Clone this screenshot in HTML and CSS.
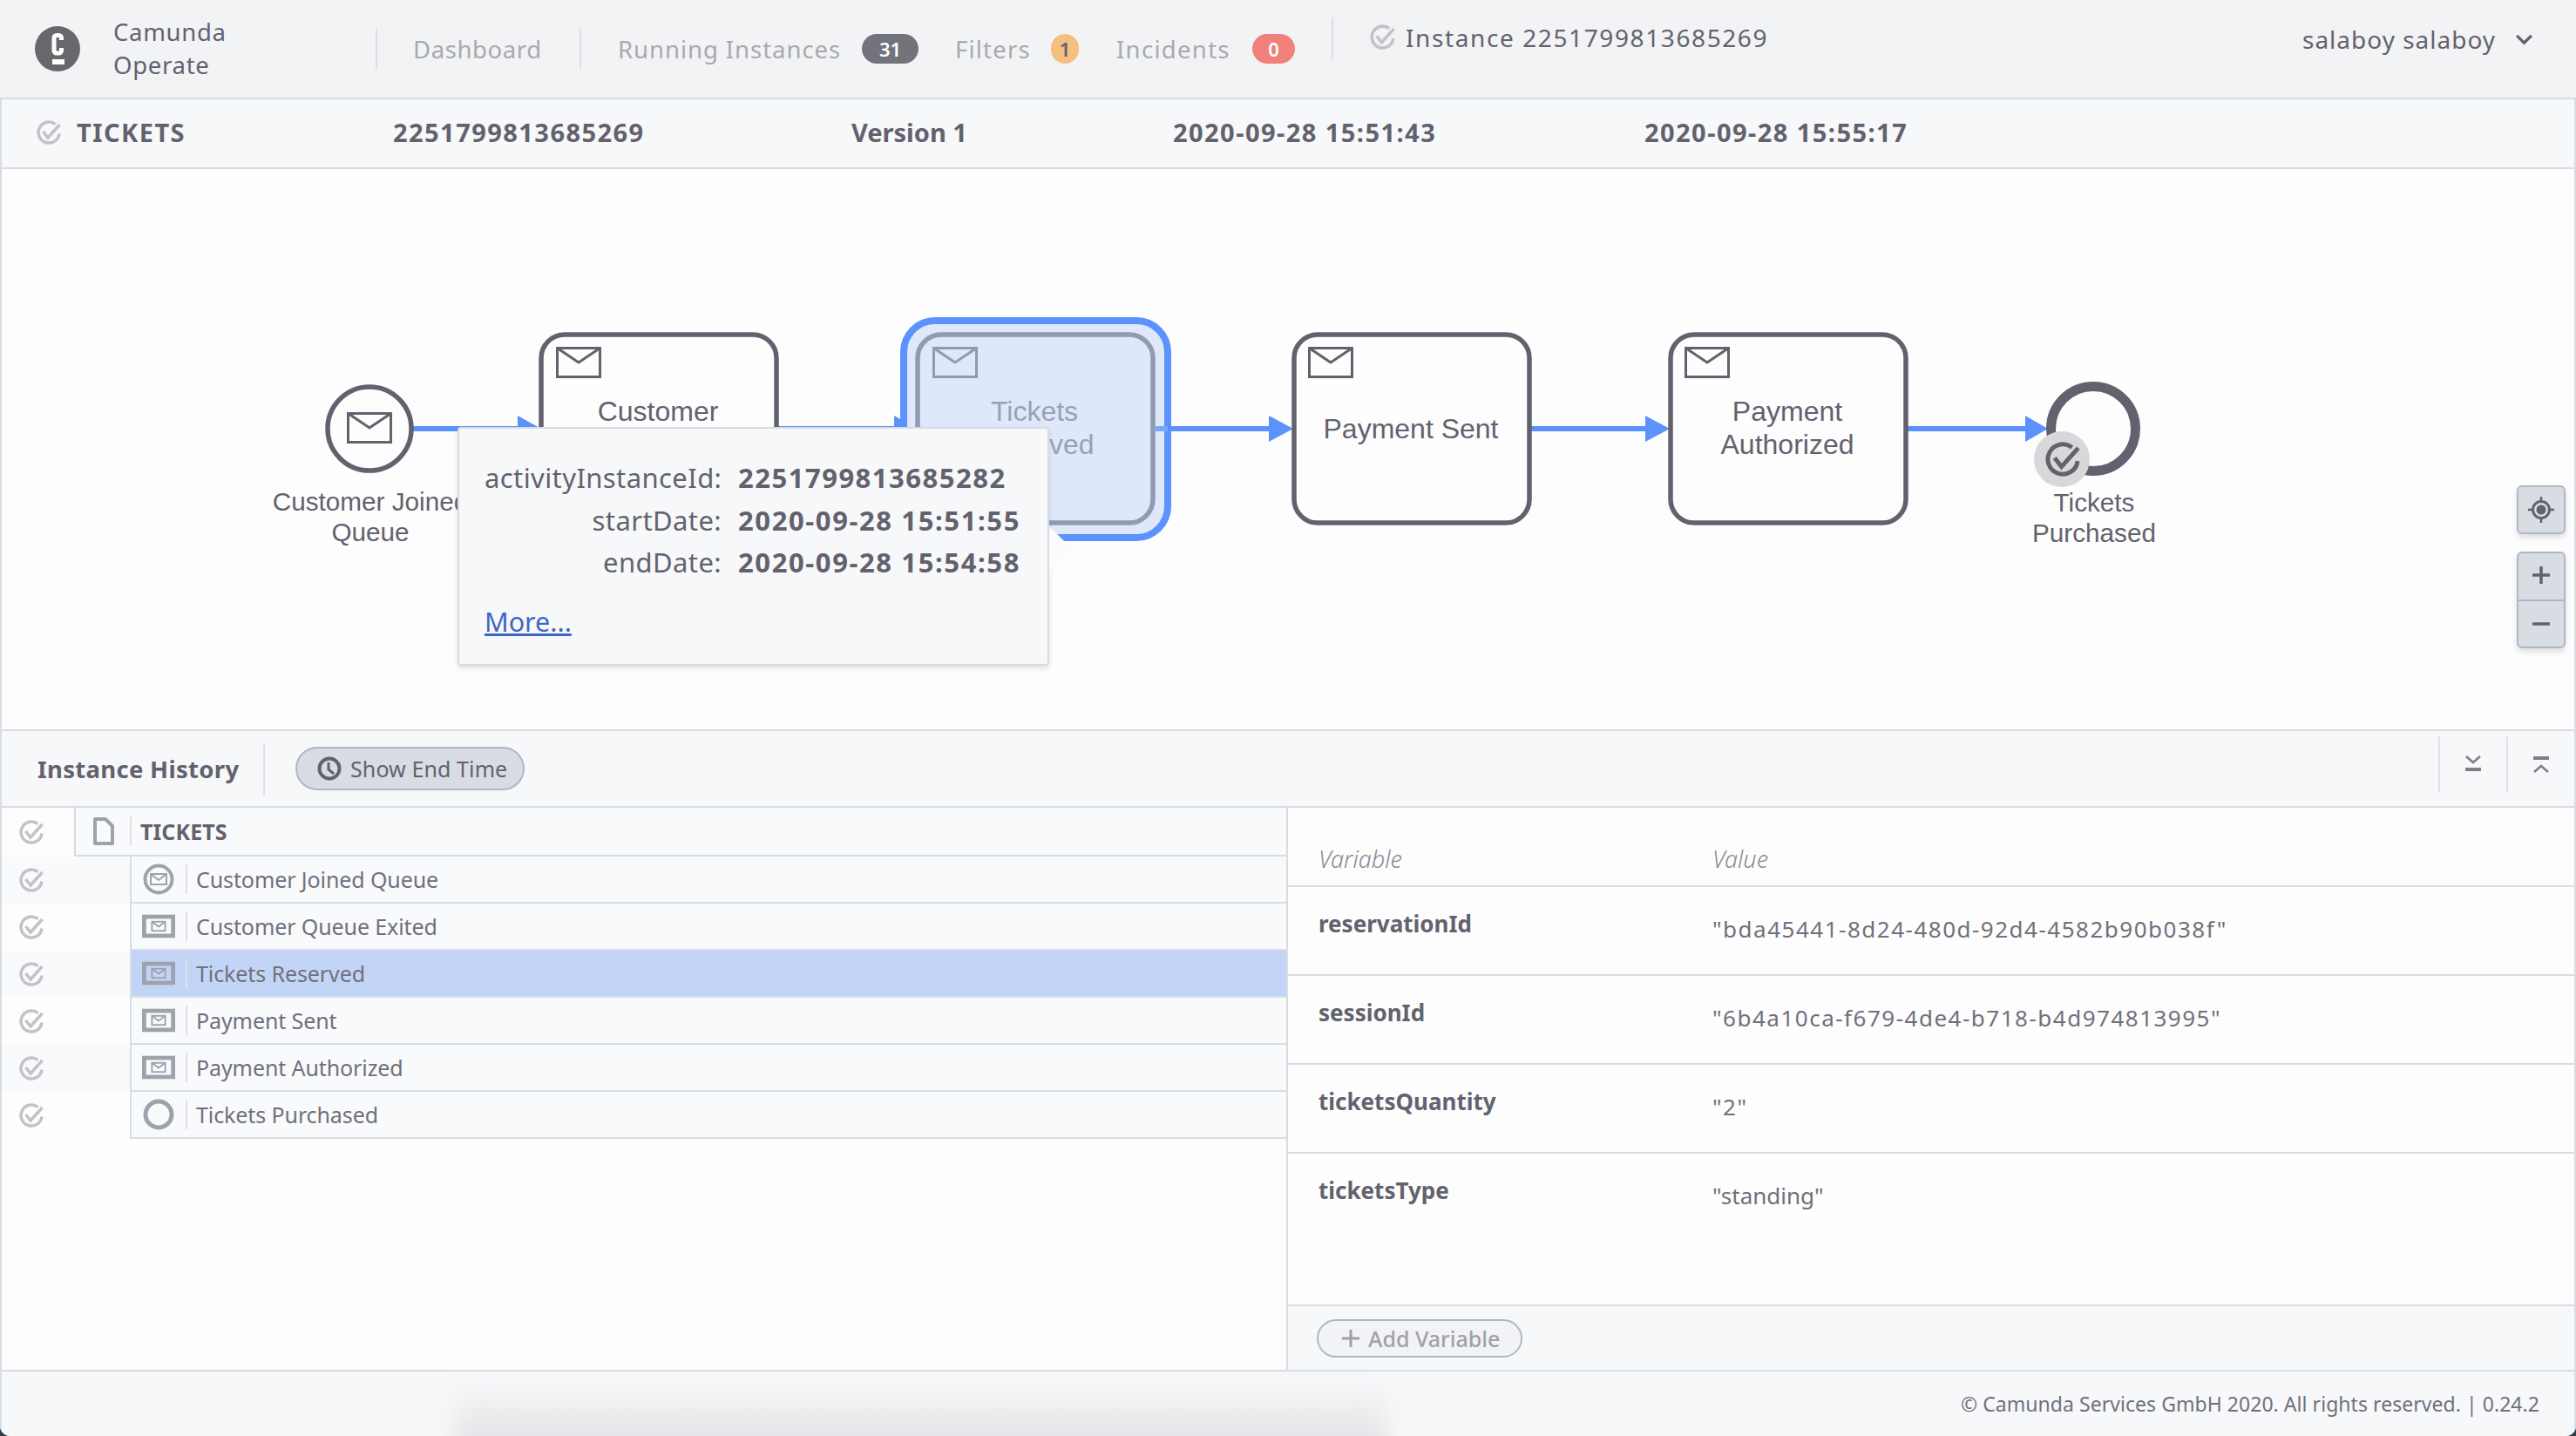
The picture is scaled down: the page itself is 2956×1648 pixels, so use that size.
FILE: index.html
```html
<!DOCTYPE html>
<html lang="en">
<head>
<meta charset="utf-8">
<title>Camunda Operate</title>
<link rel="stylesheet" href="styles.css">
</head>
<body>
<svg class="sprite" aria-hidden="true">
  <symbol id="chk" viewBox="0 0 28 28"><path d="M26 15.500A12 12 0 1 1 21.500 4.600" fill="none" stroke="currentColor" stroke-width="3.500"/><path d="M7.500 13l5.500 7L26.500 5" fill="none" stroke="currentColor" stroke-width="3.500"/></symbol>
  <symbol id="task" viewBox="0 0 40 28"><rect x="2.500" y="2.500" width="35" height="23" fill="none" stroke="currentColor" stroke-width="5"/><rect x="12" y="8.500" width="16" height="11" fill="none" stroke="currentColor" stroke-width="2"/><path d="M12 8.500l8 6 8-6" fill="none" stroke="currentColor" stroke-width="2"/></symbol>
  <symbol id="env" viewBox="0 0 52 36"><rect x="1.500" y="1.500" width="49" height="33" fill="none" stroke="currentColor" stroke-width="3"/><path d="M1.500 1.500L26 18 50.500 1.500" fill="none" stroke="currentColor" stroke-width="3"/></symbol>
</svg>
<div class="app">
  <header class="topbar">
    <div class="brand">
      <svg class="logo" viewBox="0 0 52 52"><circle cx="26" cy="26" r="26" fill="#68686c"/><path d="M30.500 16V13.500a3 3 0 0 0-3-3h-2.500a3 3 0 0 0-3 3v14.500a3 3 0 0 0 3 3h2.500a3 3 0 0 0 3-3v-3" fill="none" stroke="#fff" stroke-width="5"/><rect x="20" y="38" width="14" height="6" fill="#fff"/></svg>
      <div class="brand-name">Camunda<br>Operate</div>
    </div>
    <a class="nav nav-dash">Dashboard</a>
    <a class="nav nav-running"><span class="nav-label lbl-running">Running Instances</span><span class="badge badge-grey">31</span></a>
    <a class="nav nav-filters"><span class="nav-label lbl-filters">Filters</span><span class="badge badge-orange">1</span></a>
    <a class="nav nav-inc"><span class="nav-label lbl-inc">Incidents</span><span class="badge badge-red">0</span></a>
    <div class="crumb"><svg class="chk chk-crumb"><use href="#chk"/></svg><span>Instance 2251799813685269</span></div>
    <div class="user"><span>salaboy salaboy</span><svg class="chev" viewBox="0 0 22 14"><path d="M2 2l9 9 9-9" fill="none" stroke="currentColor" stroke-width="3.500"/></svg></div>
  </header>

  <div class="instbar">
    <div class="ib ib-name"><svg class="chk chk-bar"><use href="#chk"/></svg><span>TICKETS</span></div>
    <div class="ib ib-id">2251799813685269</div>
    <div class="ib ib-ver">Version 1</div>
    <div class="ib ib-start">2020-09-28 15:51:43</div>
    <div class="ib ib-end">2020-09-28 15:55:17</div>
  </div>

  <section class="diagram">
    <svg class="bpmn" viewBox="0 194 2956 643" width="2956" height="643">
      <g class="flows">
        <path d="M474 492H596"/><path d="M892 492H1028"/><path d="M1343 492H1458"/><path d="M1755 492H1890"/><path d="M2187 492H2327"/>
      </g>
      <g class="heads">
        <path d="M594 477L621 492 594 507z"/><path d="M1026 477L1053 492 1026 507z"/><path d="M1456 477L1484 492 1456 507z"/><path d="M1888 477L1916 492 1888 507z"/><path d="M2324 477L2350 492 2324 507z"/>
      </g>
      <circle class="ev" cx="424" cy="492" r="48"/>
      <use href="#env" x="398" y="473" width="52" height="36" class="ink"/>
      <rect class="tk" x="621" y="384" width="270" height="216" rx="27"/>
      <use href="#env" x="638" y="398" width="52" height="36" class="ink"/>
      <text class="t"><tspan x="755" y="483">Customer</tspan><tspan x="755" y="521">Queue Exited</tspan></text>

      <rect class="hl" x="1037" y="368" width="303" height="249" rx="36"/>
      <rect class="tk tk-sel" x="1053" y="384" width="270" height="216" rx="27"/>
      <use href="#env" x="1070" y="398" width="52" height="36" class="ink-sel"/>
      <text class="t t-sel"><tspan x="1187" y="483">Tickets</tspan><tspan x="1187" y="521">Reserved</tspan></text>
      <path class="flow-over" d="M1326 492H1340"/>

      <rect class="tk" x="1485" y="384" width="270" height="216" rx="27"/>
      <use href="#env" x="1501" y="398" width="52" height="36" class="ink"/>
      <text class="t"><tspan x="1619" y="503">Payment Sent</tspan></text>

      <rect class="tk" x="1917" y="384" width="270" height="216" rx="27"/>
      <use href="#env" x="1933" y="398" width="52" height="36" class="ink"/>
      <text class="t"><tspan x="2051" y="483">Payment</tspan><tspan x="2051" y="521">Authorized</tspan></text>

      <circle class="ev ev-end" cx="2402" cy="492" r="48.500"/>
      <circle class="over" cx="2366" cy="527" r="32"/>
      <use href="#chk" x="2347" y="507" width="40" height="40" class="ink"/>

      <text class="lb"><tspan x="425" y="586">Customer Joined</tspan><tspan x="425" y="621">Queue</tspan></text>
      <text class="lb"><tspan x="2403" y="587">Tickets</tspan><tspan x="2403" y="622">Purchased</tspan></text>
    </svg>

    <div class="pop">
      <span class="pop-arrow"></span>
      <dl class="pop-grid">
        <dt>activityInstanceId:</dt><dd class="dd-id">2251799813685282</dd>
        <dt>startDate:</dt><dd>2020-09-28 15:51:55</dd>
        <dt>endDate:</dt><dd>2020-09-28 15:54:58</dd>
      </dl>
      <a class="more">More...</a>
    </div>

    <div class="ctl ctl-reset">
      <button class="ctl-btn ctl-full"><svg viewBox="0 0 30 30" class="ctl-ic"><circle cx="15" cy="15" r="9.500" fill="none" stroke="currentColor" stroke-width="3"/><circle cx="15" cy="15" r="5.500" fill="currentColor"/><path d="M15 0v6M15 24v6M0 15h6M24 15h6" stroke="currentColor" stroke-width="2.500"/></svg></button>
    </div>
    <div class="ctl ctl-zoom">
      <button class="ctl-btn"><svg viewBox="0 0 22 22" class="ctl-ic2"><path d="M11 0v20M1 10h20" stroke="currentColor" stroke-width="3.500"/></svg></button>
      <button class="ctl-btn"><svg viewBox="0 0 22 22" class="ctl-ic2"><path d="M1 11h20" stroke="currentColor" stroke-width="3.500"/></svg></button>
    </div>
  </section>

  <div class="histbar">
    <div class="hist-title">Instance History</div>
    <button class="pill"><svg viewBox="0 0 28 28" class="clock"><circle cx="14" cy="14" r="11.500" fill="none" stroke="currentColor" stroke-width="4"/><path d="M13 7v8l6 5" fill="none" stroke="currentColor" stroke-width="3"/></svg><span>Show End Time</span></button>
    <div class="hist-tools">
      <span class="tool"><svg viewBox="0 0 20 20" class="tool-ic"><path d="M2 1l8 7 8-7" fill="none" stroke="currentColor" stroke-width="2.500"/><rect x="1" y="14" width="18" height="4" fill="currentColor"/></svg></span>
      <span class="tool"><svg viewBox="0 0 20 20" class="tool-ic"><rect x="1" y="1" width="18" height="4" fill="currentColor"/><path d="M2 19l8-7 8 7" fill="none" stroke="currentColor" stroke-width="2.500"/></svg></span>
    </div>
  </div>

  <main class="content">
    <div class="tree">
      <div class="row row-root">
        <div class="st st-root"><svg class="chk chk-row"><use href="#chk"/></svg></div>
        <div class="cell cell-root">
          <svg viewBox="0 0 24 32" class="file"><path d="M2 2h12l8 8v20H2z" fill="none" stroke="currentColor" stroke-width="4" stroke-linejoin="round"/></svg>
          <span class="name name-root">TICKETS</span>
        </div>
      </div>
      <div class="row row-alt">
        <div class="st"><svg class="chk chk-row"><use href="#chk"/></svg></div>
        <div class="cell">
          <span class="ic"><svg viewBox="0 0 36 36" class="ic-ev"><circle cx="18" cy="18" r="15.500" fill="none" stroke="currentColor" stroke-width="4"/><rect x="9" y="12" width="18" height="12" fill="none" stroke="currentColor" stroke-width="2"/><path d="M9 12l9 7 9-7" fill="none" stroke="currentColor" stroke-width="2"/></svg></span>
          <span class="name">Customer Joined Queue</span>
        </div>
      </div>
      <div class="row">
        <div class="st"><svg class="chk chk-row"><use href="#chk"/></svg></div>
        <div class="cell"><span class="ic"><svg class="ic-task"><use href="#task"/></svg></span><span class="name">Customer Queue Exited</span></div>
      </div>
      <div class="row row-alt row-sel">
        <div class="st"><svg class="chk chk-row"><use href="#chk"/></svg></div>
        <div class="cell"><span class="ic"><svg class="ic-task"><use href="#task"/></svg></span><span class="name">Tickets Reserved</span></div>
      </div>
      <div class="row">
        <div class="st"><svg class="chk chk-row"><use href="#chk"/></svg></div>
        <div class="cell"><span class="ic"><svg class="ic-task"><use href="#task"/></svg></span><span class="name">Payment Sent</span></div>
      </div>
      <div class="row row-alt">
        <div class="st"><svg class="chk chk-row"><use href="#chk"/></svg></div>
        <div class="cell"><span class="ic"><svg class="ic-task"><use href="#task"/></svg></span><span class="name">Payment Authorized</span></div>
      </div>
      <div class="row">
        <div class="st"><svg class="chk chk-row"><use href="#chk"/></svg></div>
        <div class="cell"><span class="ic"><svg viewBox="0 0 36 36" class="ic-ev"><circle cx="18" cy="18" r="15" fill="none" stroke="currentColor" stroke-width="5"/></svg></span><span class="name">Tickets Purchased</span></div>
      </div>
    </div>

    <div class="vars">
      <div class="vars-head"><span class="vcol">Variable</span><span>Value</span></div>
      <div class="vars-body">
        <div class="vrow"><span class="vcol vname">reservationId</span><span class="vval">"bda45441-8d24-480d-92d4-4582b90b038f"</span></div>
        <div class="vrow"><span class="vcol vname">sessionId</span><span class="vval">"6b4a10ca-f679-4de4-b718-b4d974813995"</span></div>
        <div class="vrow"><span class="vcol vname">ticketsQuantity</span><span class="vval">"2"</span></div>
        <div class="vrow vrow-last"><span class="vcol vname">ticketsType</span><span class="vval vval-text">"standing"</span></div>
      </div>
      <div class="vars-foot">
        <button class="addvar"><svg viewBox="0 0 22 22" class="plus"><path d="M11 1v20M1 11h20" stroke="currentColor" stroke-width="3"/></svg><span>Add Variable</span></button>
      </div>
    </div>
  </main>

  <footer class="footer">
    <span class="foot-shadow"></span>
    <span class="foot-text">© Camunda Services GmbH 2020. All rights reserved. | 0.24.2</span>
  </footer>
</div>
</body>
</html>
```
FILE: styles.css
```css
* { box-sizing: border-box; }
html, body { margin: 0; padding: 0; }
body {
  width: 2956px;
  height: 1648px;
  overflow: hidden;
  background: #2e3f4a;
  font-family: "Noto Sans", "Open Sans", sans-serif;
  color: #62626e;
}
.sprite { position: absolute; width: 0; height: 0; }
.app {
  width: 2956px;
  height: 1648px;
  display: flex;
  flex-direction: column;
  overflow: hidden;
  border-radius: 0 0 12px 12px;
  background: #fdfdfd;
}
button { font-family: inherit; padding: 0; margin: 0; }
dl, dd, dt { margin: 0; }

/* top bar */
.topbar {
  height: 114px;
  flex: none;
  display: flex;
  align-items: flex-start;
  background: #f2f3f5;
  border-bottom: 2px solid #d8dce3;
}
.brand { width: 431px; height: 112px; display: flex; align-items: center; padding-left: 40px; flex: none; }
.logo { width: 52px; height: 52px; flex: none; }
.brand-name { margin-left: 38px; font-size: 27.500px; line-height: 38px; color: #62626e; letter-spacing: .7px; }
.nav {
  display: flex;
  align-items: center;
  height: 46px;
  margin-top: 33px;
  font-size: 27.500px;
  color: #a8a9ae;
  letter-spacing: .95px;
  flex: none;
}
.nav-dash { width: 234px; padding-left: 41px; border-left: 2px solid #dcdee2; letter-spacing: .6px; }
.nav-running { width: 431px; padding-left: 42px; border-left: 2px solid #dcdee2; }
.nav-filters { width: 185px; letter-spacing: 1.200px; }
.nav-inc { width: 247px; letter-spacing: 1.300px; }
.nav-label { display: block; flex: none; }
.lbl-running { width: 280px; }
.lbl-filters { width: 110px; }
.lbl-inc { width: 156px; }
.badge {
  display: flex;
  align-items: center;
  justify-content: center;
  flex: none;
  height: 34px;
  border-radius: 17px;
  font-size: 22px;
  font-weight: 600;
  letter-spacing: 0;
}
.badge-grey { width: 65px; background: #72737b; color: #fff; }
.badge-orange { width: 32px; background: #f4bf7f; color: #62626e; }
.badge-red { width: 49px; background: #f2807a; color: #fff; }
.crumb {
  display: flex;
  align-items: center;
  height: 48px;
  margin-top: 20px;
  padding-left: 42px;
  border-left: 2px solid #dcdee2;
  font-size: 28px;
  letter-spacing: 1.600px;
  color: #62626e;
  width: 1114px;
  flex: none;
}
.chk { display: block; flex: none; color: #c2c3c7; }
.chk-crumb { width: 29px; height: 29px; margin-right: 12px; margin-top: -4px; }
.crumb span { margin-top: -2px; }
.user {
  display: flex;
  align-items: center;
  height: 40px;
  margin-top: 25px;
  font-size: 28px;
  color: #62626e;
  letter-spacing: 1px;
  white-space: nowrap;
  flex: none;
}
.chev { width: 21px; height: 13px; margin-left: 22px; flex: none; }

/* instance bar */
.instbar {
  height: 80px;
  flex: none;
  display: flex;
  align-items: center;
  background: #f7f8fa;
  border: 2px solid #d8dce3;
  border-width: 0 2px 2px;
  font-size: 29px;
  font-weight: 700;
  color: #62626e;
  padding-bottom: 3px;
}
.ib { flex: none; letter-spacing: 1.450px; }
.ib-name { display: flex; align-items: center; width: 449px; padding-left: 40px; }
.chk-bar { width: 28px; height: 28px; margin-right: 18px; }
.ib-id { width: 526px; }
.ib-ver { width: 369px; letter-spacing: 0; }
.ib-start { width: 541px; }

/* diagram */
.diagram {
  height: 645px;
  flex: none;
  position: relative;
  background: #fdfdfd;
  border: 2px solid #d8dce3;
  border-width: 0 2px 2px;
  overflow: hidden;
}
.bpmn { position: absolute; left: -2px; top: 0; display: block; }
.flows path { fill: none; stroke: #5b92fb; stroke-width: 6; }
.flow-over { fill: none; stroke: #7ba6f8; stroke-width: 6; }
.heads path { fill: #5b92fb; }
.ev { fill: #fdfdfd; stroke: #62626e; stroke-width: 5.500; }
.ev-end { stroke-width: 11; }
.ink { color: #62626e; }
.ink-sel { color: #8f9bb0; }
.tk { fill: #fdfdfd; stroke: #62626e; stroke-width: 5.500; }
.tk-sel { fill: #dfe8fa; stroke: #8f9bb0; }
.hl { fill: #dfe8fa; stroke: #5b92fb; stroke-width: 8; }
.t { font-family: "Liberation Sans", Arial, sans-serif; font-size: 32px; fill: #62626e; text-anchor: middle; }
.t-sel { fill: #98a2b4; }
.lb { font-family: "Liberation Sans", Arial, sans-serif; font-size: 29.700px; fill: #62626e; text-anchor: middle; }
.over { fill: #d8d8da; }

/* popover */
.pop {
  position: absolute;
  left: 523px;
  top: 296px;
  width: 679px;
  height: 274px;
  background: #f7f8fa;
  border: 2px solid #d8dce3;
  border-radius: 4px;
  box-shadow: 0 3px 5px rgba(98, 98, 110, .18);
  padding: 32px 0 0 29px;
  font-size: 31px;
}
.pop-arrow {
  position: absolute;
  left: 677px;
  top: 112px;
  width: 26px;
  height: 52px;
  background: #fbfbfc;
  clip-path: polygon(0 0, 100% 50%, 0 100%);
}
.pop-grid {
  display: grid;
  grid-template-columns: 272px auto;
  column-gap: 19px;
  row-gap: 0;
  margin: 0;
}
.pop-grid dt { text-align: right; height: 48.500px; line-height: 48px; letter-spacing: .4px; white-space: nowrap; }
.pop-grid dd { font-weight: 700; height: 48.500px; line-height: 48px; letter-spacing: 1.600px; white-space: nowrap; }
.pop-grid .dd-id { letter-spacing: 1.500px; }
.more { display: inline-block; margin-top: 21px; color: #3f67c4; text-decoration: underline; line-height: 44px; font-size: 30.500px; }

/* canvas controls */
.ctl {
  position: absolute;
  left: 2886px;
  width: 56px;
  background: #d8dce3;
  border: 2px solid #b0b7c4;
  border-radius: 6px;
  box-shadow: 0 4px 6px rgba(98, 98, 110, .2);
  display: flex;
  flex-direction: column;
  overflow: hidden;
}
.ctl-reset { top: 363px; height: 56px; }
.ctl-zoom { top: 439px; height: 111px; }
.ctl-btn {
  flex: 1;
  display: flex;
  align-items: center;
  justify-content: center;
  background: none;
  border: 0;
  color: #62626e;
}
.ctl-btn + .ctl-btn { border-top: 2px solid #b0b7c4; }
.ctl-ic { width: 30px; height: 30px; display: block; }
.ctl-ic2 { width: 22px; height: 22px; display: block; }

/* history header */
.histbar {
  height: 88px;
  flex: none;
  display: flex;
  align-items: center;
  background: #f7f8fa;
  border: 2px solid #d8dce3;
  border-width: 0 2px 2px;
}
.hist-title {
  width: 302px;
  height: 60px;
  line-height: 60px;
  padding-left: 41px;
  border-right: 2px solid #dfe1e6;
  font-size: 27.500px;
  font-weight: 700;
  color: #62626e;
  letter-spacing: .3px;
  flex: none;
  white-space: nowrap;
  margin-top: 2px;
}
.pill {
  display: flex;
  align-items: center;
  margin-left: 35px;
  width: 263px;
  height: 50px;
  background: #d8dce3;
  border: 2px solid #b0b7c4;
  border-radius: 25px;
  color: #62626e;
  font-size: 25px;
  padding-left: 23px;
  flex: none;
  letter-spacing: .1px;
}
.clock { width: 28px; height: 28px; margin-right: 10px; flex: none; }
.hist-tools { margin-left: auto; display: flex; height: 64px; margin-top: -10px; }
.tool {
  width: 78px;
  display: flex;
  align-items: center;
  justify-content: center;
  border-left: 2px solid #dfe1e6;
  color: #7d7e86;
}
.tool-ic { width: 20px; height: 20px; display: block; }

/* content */
.content { height: 645px; flex: none; display: flex; background: #fdfdfd; border-left: 2px solid #d8dce3; border-right: 2px solid #d8dce3; }
.tree { width: 1474px; flex: none; }
.row { display: flex; height: 54px; }
.row-root { height: 56px; }
.row-alt .st { background: #f9fafc; }
.st { width: 147px; flex: none; display: flex; align-items: center; padding-left: 20px; }
.st-root { width: 83px; }
.chk-row { width: 28px; height: 28px; }
.cell {
  flex: 1;
  display: flex;
  align-items: center;
  background: #f9fafc;
  border-left: 2px solid #d8dce3;
  border-bottom: 2px solid #d8dce3;
}
.cell-root { padding-left: 20px; }
.row-sel .cell { background: #c3d5f7; }
.file { width: 24px; height: 32px; color: #9fa2ab; flex: none; margin-right: 18px; }
.ic { display: flex; align-items: center; justify-content: center; width: 64px; height: 34px; padding-right: 12px; padding-left: 12px; border-right: 2px solid #dfe1e6; flex: none; color: #9fa2ab; }
.ic-task { width: 40px; height: 28px; display: block; }
.ic-ev { width: 36px; height: 36px; display: block; flex: none; }
.name { font-size: 25px; color: #70707b; margin-left: 10px; letter-spacing: -.1px; }
.name-root { font-size: 25px; font-weight: 700; color: #62626e; padding-left: 10px; margin-left: 0; border-left: 2px solid #dfe1e6; height: 34px; line-height: 34px; letter-spacing: .1px; }
.vars { flex: 1; display: flex; flex-direction: column; border-left: 2px solid #d8dce3; min-width: 0; }
.vars-head {
  height: 91px;
  flex: none;
  display: flex;
  align-items: flex-end;
  padding: 0 0 12px 35px;
  border-bottom: 2px solid #d8dce3;
  font-size: 27px;
  font-style: italic;
  font-weight: 300;
  line-height: 36px;
  color: #8a8a92;
}
.vcol { display: block; width: 452px; flex: none; }
.vars-body { flex: 1; }
.vrow { height: 102px; padding-left: 35px; display: flex; align-items: flex-start; border-bottom: 2px solid #d8dce3; }
.vrow-last { border-bottom: 0; }
.vname { font-size: 26px; font-weight: 700; line-height: 36px; padding-top: 24px; color: #62626e; }
.vval { font-size: 26px; line-height: 36px; padding-top: 30px; color: #70707b; letter-spacing: 1.500px; }
.vval-text { letter-spacing: 0; }
.vars-foot { height: 75px; flex: none; background: #f7f8fa; border-top: 2px solid #d8dce3; padding: 15px 0 0 33px; }
.addvar {
  display: flex;
  align-items: center;
  width: 236px;
  height: 44px;
  background: #f2f3f6;
  border: 2px solid #b0b7c4;
  border-radius: 22px;
  color: #a0a1a8;
  font-size: 25px;
  font-weight: 500;
  padding-left: 26px;
}
.plus { width: 22px; height: 22px; margin-right: 9px; flex: none; }

/* footer */
.footer {
  position: relative;
  flex: 1;
  display: flex;
  justify-content: flex-end;
  background: #f7f8fa;
  border: 2px solid #d8dce3;
  border-width: 2px 2px 0;
  overflow: hidden;
  padding: 18px 40px 0 0;
}
.foot-shadow {
  position: absolute;
  left: 520px;
  top: 10px;
  width: 1070px;
  height: 100px;
  background: linear-gradient(rgba(226, 227, 229, 0), #e2e3e5 70%);
  filter: blur(12px);
}
.foot-text { position: relative; font-size: 23px; line-height: 38px; color: #70707b; letter-spacing: .05px; }
```
